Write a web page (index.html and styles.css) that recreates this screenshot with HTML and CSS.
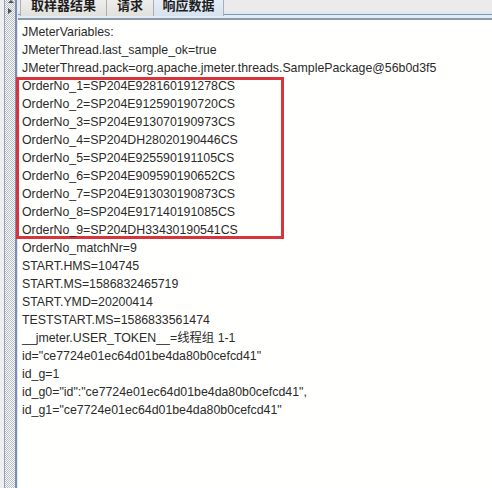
FILE: index.html
```html
<!DOCTYPE html>
<html lang="zh-CN">
<head>
    <meta charset="UTF-8">
    <title>响应数据</title>
    <link rel="stylesheet" href="styles.css">
</head>
<body>
    <div class="window">
        <!-- 分割条 -->
        <div class="splitter">
            <div class="splitter-edge"></div>
            <div class="splitter-dots">
                <span class="arrow-up"></span>
                <span class="arrow-right"></span>
            </div>
            <div class="splitter-line"></div>
        </div>

        <div class="main">
            <!-- 标签页 -->
            <div class="tabbar">
                <div class="tab">取样器结果</div>
                <div class="tab">请求</div>
                <div class="tab active">响应数据</div>
            </div>
            <div class="tab-rule"></div>

            <!-- 响应内容 -->
            <div class="content">
                <div class="line">JMeterVariables:</div>
                <div class="line">JMeterThread.last_sample_ok=true</div>
                <div class="line">JMeterThread.pack=org.apache.jmeter.threads.SamplePackage@56b0d3f5</div>
                <div class="highlight">
                    <div class="line">OrderNo_1=SP204E928160191278CS</div>
                    <div class="line">OrderNo_2=SP204E912590190720CS</div>
                    <div class="line">OrderNo_3=SP204E913070190973CS</div>
                    <div class="line">OrderNo_4=SP204DH28020190446CS</div>
                    <div class="line">OrderNo_5=SP204E925590191105CS</div>
                    <div class="line">OrderNo_6=SP204E909590190652CS</div>
                    <div class="line">OrderNo_7=SP204E913030190873CS</div>
                    <div class="line">OrderNo_8=SP204E917140191085CS</div>
                    <div class="line">OrderNo_9=SP204DH33430190541CS</div>
                </div>
                <div class="line">OrderNo_matchNr=9</div>
                <div class="line">START.HMS=104745</div>
                <div class="line">START.MS=1586832465719</div>
                <div class="line">START.YMD=20200414</div>
                <div class="line">TESTSTART.MS=1586833561474</div>
                <div class="line">__jmeter.USER_TOKEN__=线程组 1-1</div>
                <div class="line">id="ce7724e01ec64d01be4da80b0cefcd41"</div>
                <div class="line">id_g=1</div>
                <div class="line">id_g0="id":"ce7724e01ec64d01be4da80b0cefcd41",</div>
                <div class="line">id_g1="ce7724e01ec64d01be4da80b0cefcd41"</div>
            </div>
        </div>
    </div>
</body>
</html>
```

FILE: styles.css
```css
/* 基础样式 */
* {
    box-sizing: border-box;
    margin: 0;
    padding: 0;
}

body {
    width: 492px;
    height: 488px;
    overflow: hidden;
    background: #fff;
    font-family: "Liberation Sans", Arial, "Noto Sans CJK SC", sans-serif;
}

.window {
    display: flex;
    height: 488px;
}

/* 左侧分割条 */
.splitter {
    width: 18px;
    display: flex;
    flex-shrink: 0;
}

.splitter-edge {
    width: 5px;
    background: #eceef2;
    border-right: 1px solid #9aa0aa;
}

.splitter-dots {
    position: relative;
    width: 10px;
    background: repeating-conic-gradient(#b9bec8 0 25%, #f6f7f9 0 50%) 0 0 / 2px 2px;
}

/* 分割条上的小箭头 */
.arrow-up,
.arrow-right {
    position: absolute;
    width: 0;
    height: 0;
}

.arrow-up {
    left: 3px;
    top: 0;
    border-left: 3px solid transparent;
    border-right: 3px solid transparent;
    border-bottom: 3px solid #4a4f5a;
}

.arrow-right {
    left: 3px;
    top: 8px;
    border-top: 3px solid transparent;
    border-bottom: 3px solid transparent;
    border-left: 4px solid #4a4f5a;
}

.splitter-line {
    width: 3px;
    border-left: 2px solid #7d8fb3;
    background: #dfe7f3;
}

.main {
    flex: 1;
    display: flex;
    flex-direction: column;
}

/* 标签页 */
.tabbar {
    display: flex;
    height: 16px;
    overflow: hidden;
    background: linear-gradient(#e9ebee 0, #efebe7 11px, #dfe9f5 11px, #dfe9f5 14px, #8398aa 14px, #8398aa 15px, #e3ecf6 15px);
}

.tab {
    margin-top: -3px;
    height: 19px;
    line-height: 16px;
    text-align: center;
    font-family: "Noto Sans CJK SC", sans-serif;
    font-size: 13px;
    font-weight: bold;
    color: #1e1e1e;
    background: linear-gradient(#f0f0ee, #e0e0dc);
    border-left: 1px solid #a9afb8;
}

.tab:first-child {
    width: 86px;
    margin-left: 2px;
}

.tab:nth-child(2) {
    width: 47px;
}

.tab.active {
    width: 71px;
    background: linear-gradient(#e8f0f9, #d6e2ef);
    border-right: 1px solid #a9afb8;
}

.tab-rule {
    height: 4px;
    background: #e3ecf6;
    border-bottom: 2px solid #8a9aa6;
}

/* 响应内容 */
.content {
    flex: 1;
    padding: 3px 0 0 4px;
    background: #fffffd;
    font-size: 12.35px;
    line-height: 18px;
    color: #2b2b2b;
}

.line {
    white-space: nowrap;
}

.highlight {
    width: 268px;
    margin-left: -6px;
    padding-left: 6px;
    box-shadow: inset 0 0 0 3px #d8343c;
}
```
